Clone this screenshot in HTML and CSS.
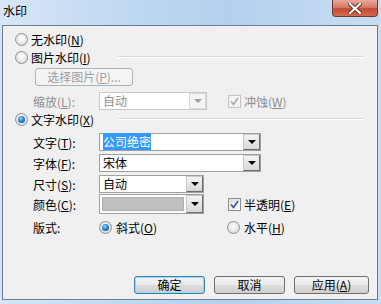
FILE: index.html
```html
<!DOCTYPE html>
<html lang="zh-CN">
<head>
    <meta charset="UTF-8">
    <title>水印</title>
    <link rel="stylesheet" href="styles.css">
</head>
<body>
    <div class="window">
        <div class="titlebar">
            <span class="title">水印</span>
            <div class="close">
                <svg width="14" height="11" viewBox="0 0 14 11">
                    <path d="M2 1 L12 10 M12 1 L2 10" stroke="#5a3028" stroke-width="4" stroke-linecap="square"/>
                    <path d="M2 1 L12 10 M12 1 L2 10" stroke="#fff" stroke-width="2.2" stroke-linecap="square"/>
                </svg>
            </div>
        </div>

        <div class="client">
            <div class="row opt">
                <span class="radio"></span><span>无水印(<u>N</u>)</span>
            </div>
            <div class="row opt">
                <span class="radio"></span><span>图片水印(<u>I</u>)</span><span class="sep"></span>
            </div>
            <div class="row btnrow">
                <span class="button pick">选择图片(<u>P</u>)...</span>
            </div>
            <div class="row sub scale">
                <span class="label disabled">缩放(<u>L</u>):</span>
                <div class="cell">
                    <div class="combo w108 off"><span class="val">自动</span><span class="drop"><i></i></span></div>
                </div>
                <span class="check off"><span class="box"><svg width="9" height="9" viewBox="0 0 9 9"><path d="M1 4.5 L3.5 7.5 L8 1" fill="none" stroke="#a8a8a8" stroke-width="1.6"/></svg></span>冲蚀(<u>W</u>)</span>
            </div>
            <div class="row opt">
                <span class="radio on"></span><span>文字水印(<u>X</u>)</span><span class="sep"></span>
            </div>
            <div class="row sub text">
                <span class="label">文字(<u>T</u>):</span>
                <div class="combo w162"><span class="val"><span class="hl">公司绝密</span></span><span class="drop"><i></i></span></div>
            </div>
            <div class="row sub font">
                <span class="label">字体(<u>F</u>):</span>
                <div class="combo w162"><span class="val">宋体</span><span class="drop"><i></i></span></div>
            </div>
            <div class="row sub size">
                <span class="label">尺寸(<u>S</u>):</span>
                <div class="combo w105"><span class="val">自动</span><span class="drop"><i></i></span></div>
            </div>
            <div class="row sub color">
                <span class="label">颜色(<u>C</u>):</span>
                <div class="cell">
                    <div class="combo w105 tall"><span class="swatch"></span><span class="drop"><i></i></span></div>
                </div>
                <span class="check"><span class="box"><svg width="9" height="9" viewBox="0 0 9 9"><path d="M1 4.5 L3.5 7.5 L8 1" fill="none" stroke="#3d4f8c" stroke-width="1.6"/></svg></span>半透明(<u>E</u>)</span>
            </div>
            <div class="row sub layout">
                <span class="label">版式:</span>
                <div class="cell cell-r">
                    <span class="radio on"></span><span class="rtext">斜式(<u>O</u>)</span>
                </div>
                <span class="radio"></span><span class="rtext">水平(<u>H</u>)</span>
            </div>

            <div class="buttons">
                <span class="button default">确定</span>
                <span class="button">取消</span>
                <span class="button apply">应用(<u>A</u>)</span>
            </div>
        </div>
    </div>
</body>
</html>
```

FILE: styles.css
```css
body {
    margin: 0;
    width: 381px;
    height: 304px;
    overflow: hidden;
    font-family: "Noto Sans CJK SC", "DejaVu Sans", sans-serif;
    font-size: 12px;
    color: #000;
}
.window {
    width: 381px;
    height: 304px;
    display: flex;
    flex-direction: column;
    background: linear-gradient(to right, #d6e6f6 0%, #bcd6f0 40%, #b4d0ee 60%, #c8ddf3 100%);
}
.titlebar {
    position: relative;
    height: 25px;
    padding-left: 3px;
    box-sizing: border-box;
}
.title {
    display: block;
    line-height: 14px;
    padding-top: 4px;
}
.close {
    position: absolute;
    top: 0;
    right: 3px;
    width: 46px;
    height: 17px;
    box-sizing: border-box;
    border: 1px solid #6e3a30;
    border-top: none;
    border-radius: 0 0 4px 4px;
    background: linear-gradient(#e9a99c 0%, #d77b68 45%, #c24a32 55%, #d56a4e 100%);
    display: flex;
    align-items: center;
    justify-content: center;
}
.client {
    flex: 1;
    margin: 0 3px 4px 2px;
    border: 1px solid #6b7c8e;
    background: #f0f0f0;
    display: flex;
    flex-direction: column;
    padding: 4px 0 5px 0;
}
.row {
    display: flex;
    align-items: center;
    height: 18px;
    flex-shrink: 0;
}
.opt {
    padding-left: 12px;
}
.opt .radio {
    margin-right: 3px;
}
.sub {
    padding-left: 30px;
}
.label {
    width: 66px;
    flex-shrink: 0;
}
.disabled, .off {
    color: #8d8d8d;
}
.cell {
    width: 129px;
    flex-shrink: 0;
}
.cell-r {
    width: 128px;
    display: flex;
    align-items: center;
}
.sep {
    margin-left: auto;
    margin-right: 14px;
    width: 245px;
    height: 1px;
    background: #d5d8dc;
    border-bottom: 1px solid #fff;
}

/* radio & checkbox */
.radio {
    width: 13px;
    height: 13px;
    box-sizing: border-box;
    border-radius: 50%;
    border: 1px solid #8e8f8f;
    background: radial-gradient(circle at 50% 40%, #ffffff 0%, #e4e4e4 60%, #cfcfcf 100%);
    position: relative;
    flex-shrink: 0;
}
.radio.on::after {
    content: "";
    position: absolute;
    left: 2px;
    top: 2px;
    width: 7px;
    height: 7px;
    border-radius: 50%;
    background: radial-gradient(circle at 40% 35%, #8fd0ff 0%, #2b86d4 45%, #0e3f80 100%);
}
.rtext {
    margin-left: 4px;
}
.check {
    display: flex;
    align-items: center;
}
.box {
    width: 13px;
    height: 13px;
    box-sizing: border-box;
    border: 1px solid #8e8f8f;
    background: linear-gradient(135deg, #dcdcdc, #ffffff);
    margin-right: 3px;
    display: flex;
    align-items: center;
    justify-content: center;
}
.check.off .box {
    border-color: #c4c4c4;
    background: #f4f4f4;
}

/* buttons */
.btnrow {
    padding-left: 32px;
    margin-top: 2px;
}
.button {
    box-sizing: border-box;
    height: 18px;
    width: 71px;
    line-height: 16px;
    text-align: center;
    border: 1px solid #707070;
    border-radius: 3px;
    background: linear-gradient(#f2f2f2 0%, #ebebeb 48%, #dddddd 52%, #cfcfcf 100%);
}
.button.pick {
    width: 98px;
    border-color: #adb2b5;
    background: #f4f4f4;
    color: #a0a0a0;
}
.button.default {
    border-color: #3c7fb1;
    box-shadow: inset 0 0 0 1px #8fdcf8;
}
.button.apply {
    width: 75px;
}
.buttons {
    margin-top: auto;
    display: flex;
    justify-content: flex-end;
    gap: 9px;
    padding-right: 8px;
}

/* combo boxes */
.scale { margin-top: 6px; }
.text { margin-top: 5px; }
.font { margin-top: 3px; }
.size { margin-top: 3px; }
.color { margin-top: 1px; height: 20px; }
.layout { margin-top: 4px; }

.combo {
    box-sizing: border-box;
    height: 18px;
    border: 1px solid #a0a0a0;
    background: #fff;
    display: flex;
    align-items: stretch;
}
.combo.tall {
    height: 20px;
}
.w108 { width: 108px; }
.w162 { width: 162px; }
.w105 { width: 105px; }
.val {
    flex: 1;
    padding-left: 3px;
    line-height: 16px;
    white-space: nowrap;
}
.hl {
    background: #3399ff;
    color: #fff;
}
.swatch {
    flex: 1;
    margin: 2px;
    background: #c0c0c0;
    border: 1px solid #b0b0b0;
}
.drop {
    width: 17px;
    box-sizing: border-box;
    border: 1px solid;
    border-color: #c8c8c8 #6d6d6d #6d6d6d #c8c8c8;
    background: linear-gradient(#f4f4f4, #d8d8d8);
    display: flex;
    align-items: center;
    justify-content: center;
}
.drop i {
    width: 0;
    height: 0;
    border-left: 4px solid transparent;
    border-right: 4px solid transparent;
    border-top: 4px solid #000;
}
.combo.off {
    border-color: #c8c8c8;
    color: #8d8d8d;
}
.combo.off .drop {
    border-color: #dadada;
    background: #f4f4f4;
}
.combo.off .drop i {
    border-top-color: #a0a0a0;
}
```
